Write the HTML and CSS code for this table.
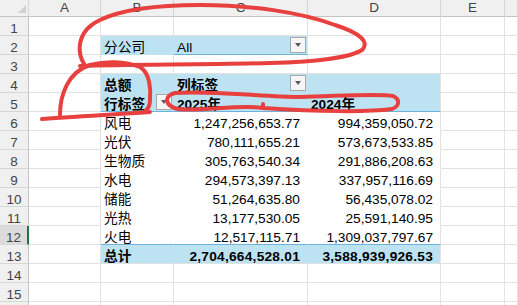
FILE: index.html
```html
<!DOCTYPE html>
<html lang="zh-CN">
<head>
<meta charset="utf-8">
<title>数据透视表</title>
<link rel="stylesheet" href="styles.css">
</head>
<body>
<div class="sheet">
  <div class="c ch corner"><svg class="tri" width="10" height="10" viewBox="0 0 10 10"><polygon points="1,9 9,9 9,1"/></svg></div>
  <div class="c ch">A</div>
  <div class="c ch">B</div>
  <div class="c ch">C</div>
  <div class="c ch">D</div>
  <div class="c ch">E</div>
  <div class="c ch"></div>

  <div class="c rh">1</div><div class="c"></div><div class="c"></div><div class="c"></div><div class="c"></div><div class="c"></div><div class="c"></div>

  <div class="c rh">2</div><div class="c"></div>
  <div class="c pv in">分公司</div>
  <div class="c pv edge line"><span>All</span><span class="dd"></span></div>
  <div class="c"></div><div class="c"></div><div class="c"></div>

  <div class="c rh">3</div><div class="c"></div><div class="c"></div><div class="c"></div><div class="c"></div><div class="c"></div><div class="c"></div>

  <div class="c rh">4</div><div class="c"></div>
  <div class="c pv b">总额</div>
  <div class="c pv b"><span>列标签</span><span class="dd"></span></div>
  <div class="c pv edge"></div>
  <div class="c"></div><div class="c"></div>

  <div class="c rh">5</div><div class="c"></div>
  <div class="c pv line b"><span>行标签</span><span class="dd"></span></div>
  <div class="c pv line b">2025年</div>
  <div class="c pv line edge b">2024年</div>
  <div class="c"></div><div class="c"></div>

  <div class="c rh">6</div><div class="c"></div>
  <div class="c pd in">风电</div><div class="c pd n">1,247,256,653.77</div><div class="c pd edge n">994,359,050.72</div>
  <div class="c"></div><div class="c"></div>

  <div class="c rh">7</div><div class="c"></div>
  <div class="c pd in">光伏</div><div class="c pd n">780,111,655.21</div><div class="c pd edge n">573,673,533.85</div>
  <div class="c"></div><div class="c"></div>

  <div class="c rh">8</div><div class="c"></div>
  <div class="c pd in">生物质</div><div class="c pd n">305,763,540.34</div><div class="c pd edge n">291,886,208.63</div>
  <div class="c"></div><div class="c"></div>

  <div class="c rh">9</div><div class="c"></div>
  <div class="c pd in">水电</div><div class="c pd n">294,573,397.13</div><div class="c pd edge n">337,957,116.69</div>
  <div class="c"></div><div class="c"></div>

  <div class="c rh">10</div><div class="c"></div>
  <div class="c pd in">储能</div><div class="c pd n">51,264,635.80</div><div class="c pd edge n">56,435,078.02</div>
  <div class="c"></div><div class="c"></div>

  <div class="c rh">11</div><div class="c"></div>
  <div class="c pd in">光热</div><div class="c pd n">13,177,530.05</div><div class="c pd edge n">25,591,140.95</div>
  <div class="c"></div><div class="c"></div>

  <div class="c rh sel">12</div><div class="c"></div>
  <div class="c pd line in">火电</div><div class="c pd line n">12,517,115.71</div><div class="c pd line edge n">1,309,037,797.67</div>
  <div class="c"></div><div class="c"></div>

  <div class="c rh">13</div><div class="c"></div>
  <div class="c pv tot b in">总计</div><div class="c pv tot b n">2,704,664,528.01</div><div class="c pv tot edge b n">3,588,939,926.53</div>
  <div class="c"></div><div class="c"></div>

  <div class="c rh">14</div><div class="c"></div><div class="c"></div><div class="c"></div><div class="c"></div><div class="c"></div><div class="c"></div>
  <div class="c rh">15</div><div class="c"></div><div class="c"></div><div class="c"></div><div class="c"></div><div class="c"></div><div class="c"></div>
  <div class="c rh"></div><div class="c"></div><div class="c"></div><div class="c"></div><div class="c"></div><div class="c"></div><div class="c"></div>
</div>

<svg class="ink" width="518" height="305" viewBox="0 0 518 305">
  <path d="M 84,64 C 76,50 78,30 100,20 C 125,8 160,5 200,5 C 250,5 300,12 335,25 C 360,33 370,42 362,50 C 350,58 310,62 270,63 C 200,65 130,64 80,66"/>
  <path d="M 60,115 C 60,95 68,72 90,65 C 105,61 125,61 140,67 C 150,73 151,90 150,100 C 150,106 148,109 145,111"/>
  <path d="M 42,119 C 80,116 120,114 150,112"/>
  <path d="M 263,104 L 263,108 C 240,104 200,112 178,109 C 165,106 163,96 175,93 C 210,90 260,97 300,97 C 340,96 380,93 393,96 C 400,99 400,106 392,109 C 370,112 320,112 263,108"/>
</svg>
</body>
</html>
```
FILE: styles.css
```css
* {
  box-sizing: border-box;
  margin: 0;
  padding: 0;
}

html,
body {
  width: 518px;
  height: 305px;
  overflow: hidden;
  background: #ffffff;
}

body {
  position: relative;
  font-family: "Liberation Sans", "Noto Sans CJK SC", sans-serif;
  font-size: 13.7px;
  color: #000000;
}

.sheet {
  display: grid;
  grid-template-columns: 29px 72px 73px 134px 133px 64px 1fr;
  grid-template-rows: 17px repeat(15, 19px) 4px;
}

.c {
  display: flex;
  align-items: flex-end;
  min-width: 0;
  padding: 0 3px;
  line-height: 12px;
  white-space: nowrap;
  border-right: 1px solid #e1e1e1;
  border-bottom: 1px solid #e1e1e1;
}

.ch {
  justify-content: center;
  align-items: center;
  line-height: 16px;
  font-size: 13.5px;
  color: #444444;
  background: #f0f0f0;
  border-right-color: #d6d6d6;
  border-bottom-color: #c4c4c4;
}

.corner {
  justify-content: flex-end;
  align-items: flex-end;
  padding: 0 1px 2px 0;
}

.tri polygon {
  fill: #cfcfcf;
}

.rh {
  justify-content: center;
  font-size: 13.5px;
  color: #444444;
  background: #f0f0f0;
  border-right-color: #c4c4c4;
  border-bottom-color: #d6d6d6;
  padding: 0;
}

.rh.sel {
  background: #dcdcdc;
  border-right: 2px solid #217346;
}

.pv {
  background: #bde3f3;
  border-right-color: transparent;
  border-bottom-color: transparent;
}

.pd {
  background: #ffffff;
  border-right-color: transparent;
  border-bottom-color: transparent;
}

.pv.edge,
.pd.edge {
  border-right-color: #e1e1e1;
}

.pv.line,
.pd.line {
  border-bottom-color: #6cb2dc;
}

.pv.tot {
  border-bottom-color: #e1e1e1;
}

.in {
  padding-left: 3px;
}

.b {
  font-weight: bold;
}

.n {
  justify-content: flex-end;
  padding-right: 7px;
}

.b.n {
  letter-spacing: 0.25px;
}

.dd {
  flex: none;
  display: flex;
  align-items: center;
  justify-content: center;
  width: 16px;
  height: 16px;
  margin: 0 -2px 1px auto;
  background: #f6f6f6;
  border: 1px solid #a8a8a8;
}

.dd::after {
  content: "";
  border-left: 3.5px solid transparent;
  border-right: 3.5px solid transparent;
  border-top: 4px solid #5a5a5a;
}

.ink {
  position: absolute;
  left: 0;
  top: 0;
  pointer-events: none;
}

.ink path {
  fill: none;
  stroke: #e8403f;
  stroke-width: 4;
  stroke-linecap: round;
  stroke-linejoin: round;
}
```
